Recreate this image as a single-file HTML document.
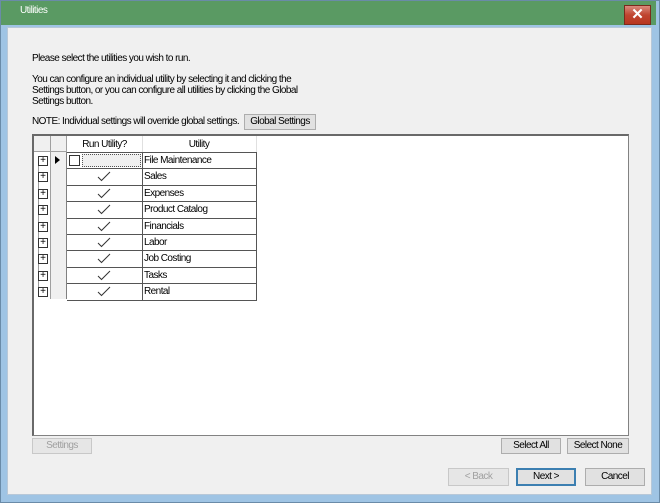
<!DOCTYPE html><html><head><style>
body{margin:0;width:660px;height:503px;overflow:hidden;background:#fff;font-family:"Liberation Sans",sans-serif;font-size:10px;letter-spacing:-0.55px;color:#000}
.a{position:absolute;white-space:nowrap}
.btn{position:absolute;background:#e1e1e1;border:1px solid #adadad;box-sizing:border-box;text-align:center;line-height:14px;font-size:10px;white-space:nowrap}
.c{position:absolute;box-sizing:border-box}
</style></head><body>
<div class="a" style="left:0;top:0;width:658px;height:501px;background:#9fc4e4;border:1px solid #6a8ba8"></div>
<div class="a" style="left:1px;top:1px;width:655px;height:24px;background:#5a9a63"></div>
<div class="a" style="left:20px;top:5px;color:#fff">Utilities</div>
<div class="a" style="left:624px;top:5px;width:27px;height:20px;background:linear-gradient(#d98a7c,#c04530 50%,#b8361f);border:1px solid #7a2a1c;box-sizing:border-box;color:#fff;font-weight:bold;text-align:center;line-height:18px;font-size:15px;letter-spacing:0">✕</div>
<div class="a" style="left:7px;top:27px;width:645px;height:468px;background:#f0f0f0;border:1px solid #b8c8d8;box-sizing:border-box"></div>
<div class="a" style="left:32px;top:53px">Please select the utilities you wish to run.</div>
<div class="a" style="left:32px;top:74px;line-height:11px">You can configure an individual utility by selecting it and clicking the<br>Settings button, or you can configure all utilities by clicking the Global<br>Settings button.</div>
<div class="a" style="left:32px;top:116px">NOTE: Individual settings will override global settings.</div>
<div class="btn" style="left:244px;top:114px;width:72px;height:16px">Global Settings</div>
<div class="a" style="left:32px;top:134px;width:597px;height:302px;background:#fff;border:1px solid #828282;border-top:2px solid #696969;border-left:2px solid #696969;box-sizing:border-box"></div>
<div class="c" style="left:34px;top:136px;width:33px;height:16px;background:#f0f0f0;border-right:1px solid #a0a0a0;border-bottom:1px solid #a0a0a0"></div>
<div class="c" style="left:50px;top:136px;width:1px;height:163px;background:#a0a0a0"></div>
<div class="c" style="left:50px;top:152px;width:17px;height:147px;background:#f0f0f0;border-right:1px solid #808080;border-left:1px solid #a0a0a0"></div>
<div class="c" style="left:67px;top:136px;width:190px;height:16px;border-right:1px solid #e0e0e0"></div>
<div class="a" style="left:67px;top:139px;width:75px;text-align:center">Run Utility?</div>
<div class="a" style="left:142px;top:139px;width:114px;text-align:center">Utility</div>
<div class="c" style="left:142px;top:136px;width:1px;height:16px;background:#e0e0e0"></div>
<div class="c" style="left:38px;top:160px;width:1px;height:131px;background:#999"></div>
<div id="rows"></div>
<script>
var n=["File Maintenance","Sales","Expenses","Product Catalog","Financials","Labor","Job Costing","Tasks","Rental"],h="";
for(var i=0;i<9;i++){var y=152+i*16.4;
h+='<div class="c" style="left:67px;top:'+y+'px;width:190px;height:17.4px;border:1px solid #555;border-left:none"></div>';
h+='<div class="c" style="left:142px;top:'+y+'px;width:1px;height:17px;background:#555"></div>';
h+='<div class="a" style="left:144px;top:'+(y+3)+'px">'+n[i]+'</div>';
h+='<div class="c" style="left:38px;top:'+(y+4)+'px;width:10px;height:10px;border:1px solid #333;background:#fff;font-size:10px;line-height:8px;text-align:center;letter-spacing:0">+</div>';
if(i==0){h+='<div class="c" style="left:69px;top:'+(y+3)+'px;width:11px;height:11px;border:1px solid #333;background:#fff"></div><div class="c" style="left:82px;top:'+(y+2)+'px;width:59px;height:13px;border:1px dotted #555;background:#f0f0f0"></div><div class="a" style="left:55px;top:'+(y+4)+'px;width:0;height:0;border-left:5px solid #000;border-top:4px solid transparent;border-bottom:4px solid transparent"></div>';}
else h+='<svg class="a" style="left:97px;top:'+(y+3)+'px" width="14" height="11"><path d="M1 6L4.5 9.5L13 1" fill="none" stroke="#333" stroke-width="1"/></svg>';}
document.getElementById("rows").innerHTML=h;
</script>
<div class="btn" style="left:32px;top:438px;width:60px;height:16px;color:#a0a0a0;border-color:#c8c8c8;background:#e6e6e6">Settings</div>
<div class="btn" style="left:501px;top:438px;width:60px;height:16px">Select All</div>
<div class="btn" style="left:567px;top:438px;width:62px;height:16px">Select None</div>
<div class="btn" style="left:448px;top:468px;width:61px;height:18px;line-height:16px;color:#a0a0a0;border-color:#c8c8c8;background:#e6e6e6">&lt; Back</div>
<div class="btn" style="left:516px;top:468px;width:60px;height:18px;line-height:14px;border:2px solid #3c7fb1">Next &gt;</div>
<div class="btn" style="left:585px;top:468px;width:60px;height:18px;line-height:16px">Cancel</div>
</body></html>
